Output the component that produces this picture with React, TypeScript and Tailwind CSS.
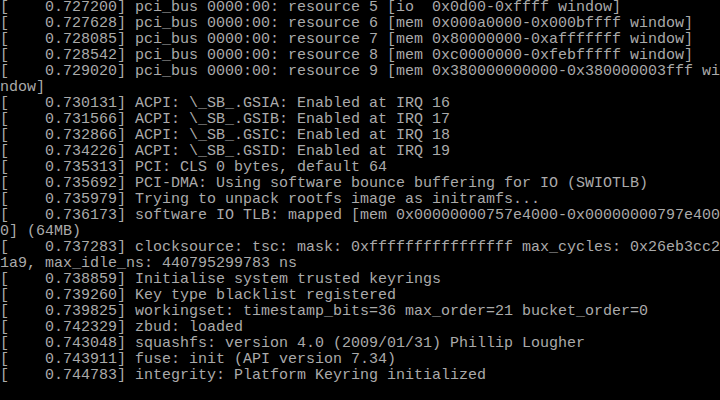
import React from "react";

const lines: string[] = [
  "[    0.727200] pci_bus 0000:00: resource 5 [io  0x0d00-0xffff window]",
  "[    0.727628] pci_bus 0000:00: resource 6 [mem 0x000a0000-0x000bffff window]",
  "[    0.728085] pci_bus 0000:00: resource 7 [mem 0x80000000-0xafffffff window]",
  "[    0.728542] pci_bus 0000:00: resource 8 [mem 0xc0000000-0xfebfffff window]",
  "[    0.729020] pci_bus 0000:00: resource 9 [mem 0x380000000000-0x380000003fff wi",
  "ndow]",
  "[    0.730131] ACPI: \\_SB_.GSIA: Enabled at IRQ 16",
  "[    0.731566] ACPI: \\_SB_.GSIB: Enabled at IRQ 17",
  "[    0.732866] ACPI: \\_SB_.GSIC: Enabled at IRQ 18",
  "[    0.734226] ACPI: \\_SB_.GSID: Enabled at IRQ 19",
  "[    0.735313] PCI: CLS 0 bytes, default 64",
  "[    0.735692] PCI-DMA: Using software bounce buffering for IO (SWIOTLB)",
  "[    0.735979] Trying to unpack rootfs image as initramfs...",
  "[    0.736173] software IO TLB: mapped [mem 0x00000000757e4000-0x00000000797e400",
  "0] (64MB)",
  "[    0.737283] clocksource: tsc: mask: 0xffffffffffffffff max_cycles: 0x26eb3cc2",
  "1a9, max_idle_ns: 440795299783 ns",
  "[    0.738859] Initialise system trusted keyrings",
  "[    0.739260] Key type blacklist registered",
  "[    0.739825] workingset: timestamp_bits=36 max_order=21 bucket_order=0",
  "[    0.742329] zbud: loaded",
  "[    0.743048] squashfs: version 4.0 (2009/01/31) Phillip Lougher",
  "[    0.743911] fuse: init (API version 7.34)",
  "[    0.744783] integrity: Platform Keyring initialized",
  "",
];

export default function App() {
  return (
    <div className="w-[720px] h-[400px] bg-black overflow-hidden flex flex-col font-['Liberation_Mono',monospace] text-[15px] leading-[16px] text-[#aaaaaa]">
      {lines.map((l, i) => (
        <div key={i} className="h-[16px] whitespace-pre">
          {l}
        </div>
      ))}
    </div>
  );
}
